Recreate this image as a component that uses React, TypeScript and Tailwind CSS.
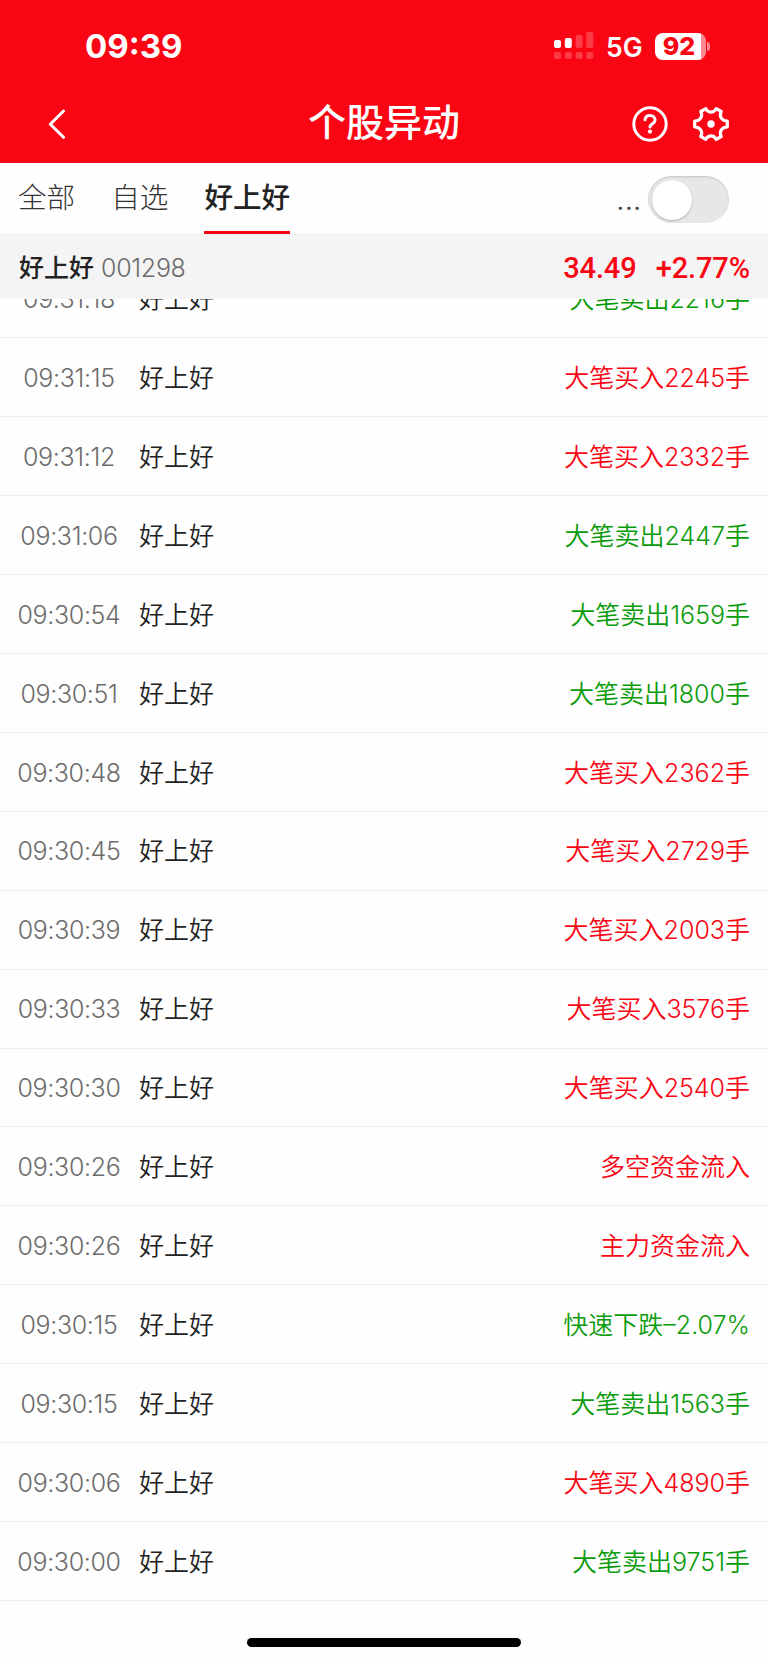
import clsx from "clsx";

type Move = { time: string; text: string; up?: boolean };

const STOCK = { name: "好上好", code: "001298", price: "34.49", change: "+2.77%" };

const TABS = ["全部", "自选", "好上好"];

const MOVES: Move[] = [
  { time: "09:31:18", text: "大笔卖出2216手" },
  { time: "09:31:15", text: "大笔买入2245手", up: true },
  { time: "09:31:12", text: "大笔买入2332手", up: true },
  { time: "09:31:06", text: "大笔卖出2447手" },
  { time: "09:30:54", text: "大笔卖出1659手" },
  { time: "09:30:51", text: "大笔卖出1800手" },
  { time: "09:30:48", text: "大笔买入2362手", up: true },
  { time: "09:30:45", text: "大笔买入2729手", up: true },
  { time: "09:30:39", text: "大笔买入2003手", up: true },
  { time: "09:30:33", text: "大笔买入3576手", up: true },
  { time: "09:30:30", text: "大笔买入2540手", up: true },
  { time: "09:30:26", text: "多空资金流入", up: true },
  { time: "09:30:26", text: "主力资金流入", up: true },
  { time: "09:30:15", text: "快速下跌–2.07%" },
  { time: "09:30:15", text: "大笔卖出1563手" },
  { time: "09:30:06", text: "大笔买入4890手", up: true },
  { time: "09:30:00", text: "大笔卖出9751手" },
];

function SignalIcon() {
  return (
    <svg width="40" height="28" viewBox="0 0 40 28" fill="#fff">
      <rect x="0" y="8" width="7" height="8" rx="2" />
      <rect x="10.8" y="6" width="7" height="10" rx="2" />
      <g opacity="0.22">
        <rect x="21.6" y="3" width="7" height="13" rx="2" />
        <rect x="32.3" y="0" width="7" height="16" rx="2" />
        <rect x="0" y="20" width="7" height="7" rx="2" />
        <rect x="10.8" y="20" width="7" height="7" rx="2" />
        <rect x="21.6" y="20" width="7" height="7" rx="2" />
        <rect x="32.3" y="20" width="7" height="7" rx="2" />
      </g>
    </svg>
  );
}

function Battery() {
  return (
    <div className="flex items-center">
      <div className="flex h-[27px] w-[51px] items-center justify-center rounded-[8px] bg-[linear-gradient(to_right,#fff_46.5px,#fd8a90_46.5px)] pr-[2px] text-[25px] leading-[27px] font-extrabold text-[#fa0513]">
        92
      </div>
      <div className="ml-[1.5px] h-[9px] w-[3px] rounded-r-full bg-[#fd8a90]" />
    </div>
  );
}

function BackIcon() {
  return (
    <svg width="18" height="30" viewBox="0 0 18 30" fill="none" stroke="#fff" strokeWidth="3" strokeLinecap="round" strokeLinejoin="round">
      <path d="M15.5 2 2.3 15.2l13.2 13" />
    </svg>
  );
}

function HelpIcon() {
  return (
    <svg width="36" height="36" viewBox="0 0 36 36" fill="none" stroke="#fff" strokeWidth="3" strokeLinecap="round">
      <circle cx="18" cy="18" r="16.2" />
      <path d="M13 13.8c.2-2.6 2.2-4.2 5-4.2 2.9 0 5.1 1.8 5.1 4.4 0 3.6-5.1 3.9-5.1 7" />
      <circle cx="18" cy="25.6" r="2.1" fill="#fff" stroke="none" />
    </svg>
  );
}

function GearIcon() {
  return (
    <svg width="36" height="36" viewBox="0 0 36 36" fill="none" stroke="#fff" strokeWidth="3.2" strokeLinejoin="round">
      <path d="M12.8 2.6Q14.6 6.2 18 6.2t5.2-3.6l5 2.9Q26.4 9.200 28.200 12t6.100 3.200v5.600Q29.900 21.200 28.200 24t0 6.500l-5 2.900Q21.400 29.800 18 29.800t-5.200 3.600L7.800 30.500Q9.600 26.800 7.800 24t-6.100-3.200v-5.600Q6.100 14.800 7.800 12T7.800 5.500z" />
      <circle cx="18" cy="18" r="3.7" fill="#fff" stroke="none" />
    </svg>
  );
}

function MoveRow({ move }: { move: Move }) {
  return (
    <li className="flex h-[78.93px] shrink-0 items-center border-b border-[#ededed] pt-[3px] pr-[18px] text-[25px]">
      <span className="w-[138px] text-center font-[350] tracking-[-0.35px] text-[#6c6c6c]">{move.time}</span>
      <span className="pl-px font-[350] text-[#222]">{STOCK.name}</span>
      <span className={clsx("ml-auto font-[350]", move.up ? "text-[#fa0513]" : "text-[#0a9b0a]")}>{move.text}</span>
    </li>
  );
}

export default function App() {
  return (
    <div className="flex h-[1662px] w-[768px] flex-col overflow-hidden bg-[#fefefe] font-['Inter','Noto_Sans_CJK_SC',sans-serif]">
      <header className="h-[163px] shrink-0 bg-[#fa0513] text-white">
        <div className="flex h-[82px] items-center pt-[10px] pr-[58px] pl-[85px]">
          <span className="text-[33px] leading-none font-bold">09:39</span>
          <div className="ml-auto flex items-center">
            <SignalIcon />
            <span className="ml-3 pt-[2px] text-[26.5px] leading-none font-semibold">5G</span>
            <div className="ml-3">
              <Battery />
            </div>
          </div>
        </div>
        <div className="grid h-[81px] grid-cols-[1fr_auto_1fr] items-center pt-[2px] pr-[39px] pl-[48px]">
          <BackIcon />
          <h1 className="mr-[9px] pb-[4px] text-[38px] leading-none font-medium">个股异动</h1>
          <div className="flex items-center justify-end gap-[25px]">
            <HelpIcon />
            <GearIcon />
          </div>
        </div>
      </header>

      <nav className="flex h-[72px] shrink-0 items-stretch gap-[36px] border-b border-[#ececec] pl-[18px] text-[28.6px]">
        {TABS.map((tab, i) => (
          <button
            key={tab}
            className={clsx(
              "border-b-[3px] pt-[3px]",
              i === 2 ? "border-[#fa0513] font-medium text-[#222]" : "border-transparent font-light text-[#333]"
            )}
          >
            {tab}
          </button>
        ))}
        <div className="mr-[39px] ml-auto flex items-center gap-[6px] pt-[2px]">
          <span className="pt-1 text-[25px] tracking-[1.2px] text-[#444]">...</span>
          <div className="flex h-[47px] w-[81px] items-center rounded-full bg-[#e7e7e7] px-1 shadow-[inset_0_1px_2px_rgba(0,0,0,0.15)]">
            <div className="h-10 w-10 rounded-full bg-white shadow-[0_1px_2px_rgba(0,0,0,0.25)]" />
          </div>
        </div>
      </nav>

      <section className="flex h-[64px] shrink-0 items-center bg-[#f4f4f4] pt-[3px] pr-[18px] pl-[19px]">
        <span className="text-[25px] font-medium text-[#222]">{STOCK.name}</span>
        <span className="ml-[7px] text-[25px] font-[350] tracking-[-0.3px] text-[#6c6c6c]">{STOCK.code}</span>
        <div className="ml-auto flex gap-[19px] pt-px font-['Roboto'] text-[29px] font-medium tracking-[-0.1px] text-[#fa0513]">
          <span>{STOCK.price}</span>
          <span>{STOCK.change}</span>
        </div>
      </section>

      <ul className="flex h-[1302px] shrink-0 flex-col justify-end overflow-hidden">
        {MOVES.map((move, i) => (
          <MoveRow key={i} move={move} />
        ))}
      </ul>

      <div className="mx-auto mt-[37px] h-[9px] w-[274px] shrink-0 rounded-full bg-black" />
    </div>
  );
}
